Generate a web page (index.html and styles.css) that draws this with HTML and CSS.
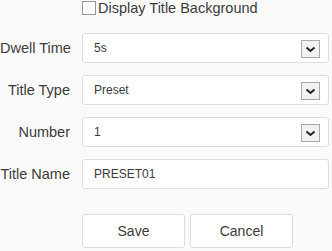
FILE: index.html
```html
<!DOCTYPE html>
<html lang="en">
<head>
  <meta charset="UTF-8">
  <meta name="viewport" content="width=device-width, initial-scale=1.0">
  <title>Title Settings</title>
  <link rel="stylesheet" href="styles.css">
</head>
<body>
  <div class="panel">
    <label class="check-row">
      <span class="checkbox"></span>
      <span>Display Title Background</span>
    </label>

    <div class="form">
      <div class="row">
        <span class="label">Dwell Time</span>
        <div class="field select">
          <span>5s</span>
          <span class="arrow">
            <svg width="11" height="7" viewBox="0 0 11 7"><path d="M1.5 1.5 L5.5 5 L9.5 1.5" fill="none" stroke="#222" stroke-width="2"/></svg>
          </span>
        </div>
      </div>
      <div class="row">
        <span class="label">Title Type</span>
        <div class="field select">
          <span>Preset</span>
          <span class="arrow">
            <svg width="11" height="7" viewBox="0 0 11 7"><path d="M1.5 1.5 L5.5 5 L9.5 1.5" fill="none" stroke="#222" stroke-width="2"/></svg>
          </span>
        </div>
      </div>
      <div class="row">
        <span class="label">Number</span>
        <div class="field select">
          <span>1</span>
          <span class="arrow">
            <svg width="11" height="7" viewBox="0 0 11 7"><path d="M1.5 1.5 L5.5 5 L9.5 1.5" fill="none" stroke="#222" stroke-width="2"/></svg>
          </span>
        </div>
      </div>
      <div class="row">
        <span class="label">Title Name</span>
        <div class="field">
          <span>PRESET01</span>
        </div>
      </div>
    </div>

    <div class="actions">
      <button class="btn">Save</button>
      <button class="btn">Cancel</button>
    </div>
  </div>
</body>
</html>
```

FILE: styles.css
```css
body {
  margin: 0;
  background: #fafafa;
  font-family: "Liberation Sans", Arial, sans-serif;
  color: #3a3a3a;
}

.panel {
  width: 332px;
}

.check-row {
  display: flex;
  align-items: center;
  gap: 2px;
  height: 16px;
  padding-left: 82px;
  font-size: 14.5px;
}

.checkbox {
  width: 12px;
  height: 12px;
  border: 1px solid #999;
  background: #fff;
}

.form {
  display: flex;
  flex-direction: column;
  gap: 12px;
  margin-top: 17px;
}

.row {
  display: grid;
  grid-template-columns: 70px 247px;
  column-gap: 12px;
  align-items: center;
}

.label {
  text-align: right;
  font-size: 14.5px;
  white-space: nowrap;
}

.field {
  display: flex;
  align-items: center;
  justify-content: space-between;
  height: 28px;
  padding: 0 8px 0 11px;
  background: #fff;
  border: 1px solid #ddd;
  border-radius: 3px;
  font-size: 12px;
}

.arrow {
  display: flex;
  align-items: center;
  justify-content: center;
  width: 17px;
  height: 16px;
  border: 1px solid #a8a8a8;
  background: #f2f2f2;
  margin-top: 2px;
}

.actions {
  display: flex;
  gap: 5px;
  margin-top: 25px;
  padding-left: 82px;
}

.btn {
  width: 103px;
  height: 34px;
  background: #fff;
  border: 1px solid #ddd;
  border-radius: 3px;
  font-family: "Liberation Sans", Arial, sans-serif;
  font-size: 14px;
  color: #3a3a3a;
}
```
